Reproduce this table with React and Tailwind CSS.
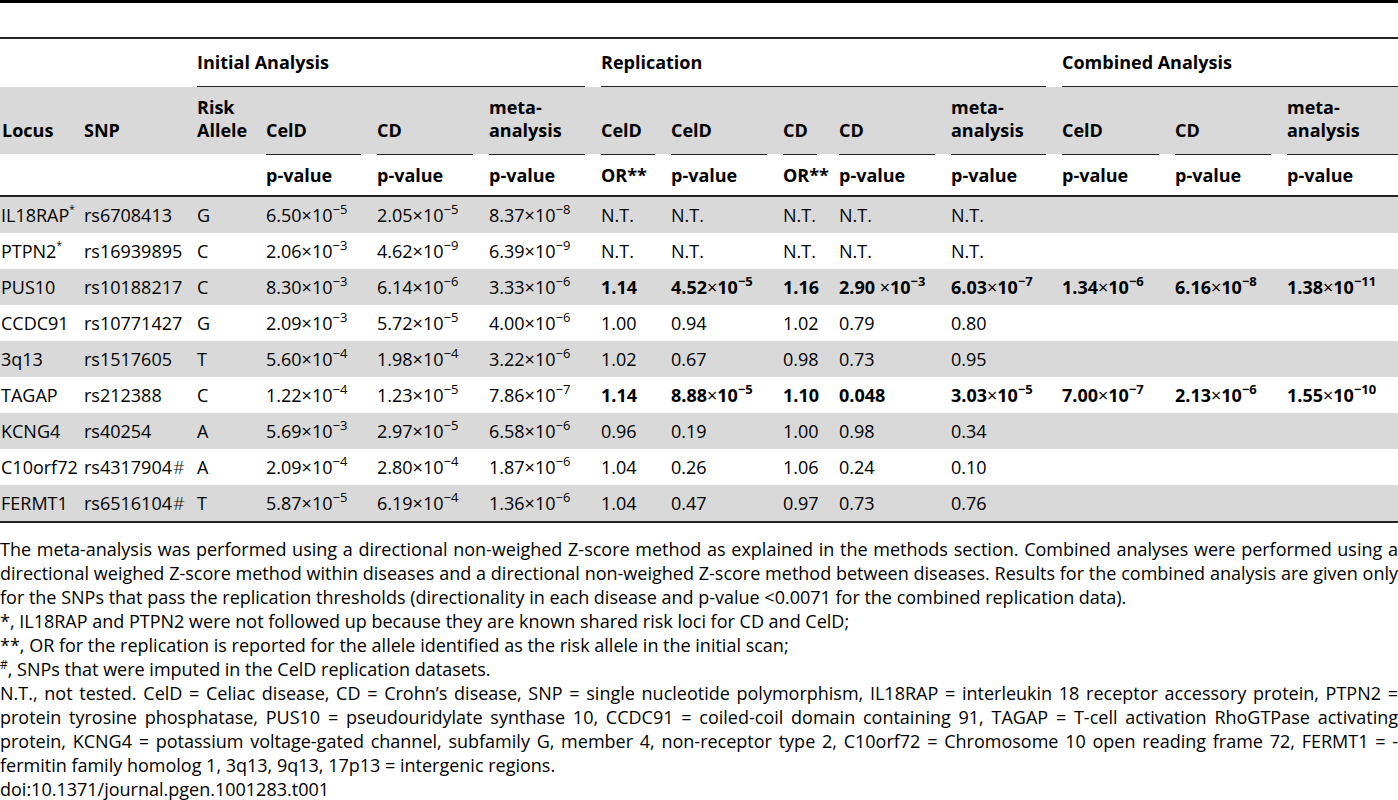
const COLS =
  'grid grid-cols-[84px_113px_69px_111px_112px_112px_70px_112px_56px_112px_111px_113px_112px_111px]'

const sci = (m, x, sp) => ({ m, x, sp })

const rows = [
  ['IL18RAP', true, 'rs6708413', false, 'G', sci('6.50', 5), sci('2.05', 5), sci('8.37', 8), 'N.T.', 'N.T.', 'N.T.', 'N.T.', 'N.T.', '', '', '', false],
  ['PTPN2', true, 'rs16939895', false, 'C', sci('2.06', 3), sci('4.62', 9), sci('6.39', 9), 'N.T.', 'N.T.', 'N.T.', 'N.T.', 'N.T.', '', '', '', false],
  ['PUS10', false, 'rs10188217', false, 'C', sci('8.30', 3), sci('6.14', 6), sci('3.33', 6), '1.14', sci('4.52', 5), '1.16', sci('2.90', 3, true), sci('6.03', 7), sci('1.34', 6), sci('6.16', 8), sci('1.38', 11), true],
  ['CCDC91', false, 'rs10771427', false, 'G', sci('2.09', 3), sci('5.72', 5), sci('4.00', 6), '1.00', '0.94', '1.02', '0.79', '0.80', '', '', '', false],
  ['3q13', false, 'rs1517605', false, 'T', sci('5.60', 4), sci('1.98', 4), sci('3.22', 6), '1.02', '0.67', '0.98', '0.73', '0.95', '', '', '', false],
  ['TAGAP', false, 'rs212388', false, 'C', sci('1.22', 4), sci('1.23', 5), sci('7.86', 7), '1.14', sci('8.88', 5), '1.10', '0.048', sci('3.03', 5), sci('7.00', 7), sci('2.13', 6), sci('1.55', 10), true],
  ['KCNG4', false, 'rs40254', false, 'A', sci('5.69', 3), sci('2.97', 5), sci('6.58', 6), '0.96', '0.19', '1.00', '0.98', '0.34', '', '', '', false],
  ['C10orf72', false, 'rs4317904', true, 'A', sci('2.09', 4), sci('2.80', 4), sci('1.87', 6), '1.04', '0.26', '1.06', '0.24', '0.10', '', '', '', false],
  ['FERMT1', false, 'rs6516104', true, 'T', sci('5.87', 5), sci('6.19', 4), sci('1.36', 6), '1.04', '0.47', '0.97', '0.73', '0.76', '', '', '', false],
]

function Val({ v }) {
  if (typeof v === 'string') return v
  return (
    <>
      {v.m}
      {v.sp ? ' ' : ''}
      <span className="font-normal">×</span>10
      <sup className="text-[13px] -top-[8px]">−{v.x}</sup>
    </>
  )
}

function TwoLine({ a, b }) {
  return (
    <div>
      <div>{a}</div>
      <div>{b}</div>
    </div>
  )
}

function Line({ children, last }) {
  return <div className={last ? 'text-justify' : 'text-justify [text-align-last:justify]'}>{children}</div>
}

export default function App() {
  const sub = ['p-value', 'p-value', 'p-value', 'OR**', 'p-value', 'OR**', 'p-value', 'p-value', 'p-value', 'p-value', 'p-value']

  return (
    <div className="w-[1398px] min-h-[800px] bg-white text-black font-['Open_Sans',sans-serif] text-[18px]">
      <div className="h-[3px] bg-black" />
      <div className="h-[34px]" />
      <div className="border-t-2 border-[#222]" />

      {/* group header */}
      <div className={`${COLS} h-[48px] font-bold`}>
        <div className="col-span-2" />
        <div className="col-span-4 mr-4 border-b border-[#222] flex items-center">Initial Analysis</div>
        <div className="col-span-5 mr-4 border-b border-[#222] flex items-center">Replication</div>
        <div className="col-span-3 border-b border-[#222] flex items-center">Combined Analysis</div>
      </div>

      {/* column header */}
      <div className={`${COLS} h-[67px] bg-[#d9d9d9] font-bold leading-[23px] items-end pb-[12px]`}>
        <div className="pl-[2px]">Locus</div>
        <div>SNP</div>
        <TwoLine a="Risk" b="Allele" />
        <div>CelD</div>
        <div>CD</div>
        <TwoLine a="meta-" b="analysis" />
        <div>CelD</div>
        <div>CelD</div>
        <div>CD</div>
        <div>CD</div>
        <TwoLine a="meta-" b="analysis" />
        <div>CelD</div>
        <div>CD</div>
        <TwoLine a="meta-" b="analysis" />
      </div>

      {/* p-value row */}
      <div className={`${COLS} h-[41px] font-bold`}>
        <div />
        <div />
        <div />
        {sub.map((s, i) => (
          <div
            key={i}
            className={`border-t border-[#222] flex items-center whitespace-nowrap ${i === 10 ? '' : i === 5 ? 'mr-[22px]' : 'mr-4'}`}
          >
            {s}
          </div>
        ))}
      </div>
      <div className="border-t-2 border-[#222]" />

      {/* data */}
      {rows.map((r, ri) => {
        const [locus, star, snp, hash, allele, ...rest] = r
        const bold = rest[11]
        const vals = rest.slice(0, 11)
        return (
          <div key={ri} className={`${COLS} h-9 items-center whitespace-nowrap ${ri % 2 === 0 ? 'bg-[#d9d9d9]' : 'bg-white'}`}>
            <div className="pl-[1px]">
              {locus}
              {star && <sup className="text-[10px] -top-[9px]">*</sup>}
            </div>
            <div>
              {snp}
              {hash && <span className="font-light pl-[1px]">#</span>}
            </div>
            <div>{allele}</div>
            {vals.map((v, i) => (
              <div key={i} className={bold && i >= 3 ? 'font-bold' : ''}>
                <Val v={v} />
              </div>
            ))}
          </div>
        )
      })}
      <div className="border-t-2 border-[#222]" />

      {/* footnotes */}
      <div className="mt-[14px] leading-[24px]">
        <Line>The meta-analysis was performed using a directional non-weighed Z-score method as explained in the methods section. Combined analyses were performed using a</Line>
        <Line>directional weighed Z-score method within diseases and a directional non-weighed Z-score method between diseases. Results for the combined analysis are given only</Line>
        <Line last>for the SNPs that pass the replication thresholds (directionality in each disease and p-value &lt;0.0071 for the combined replication data).</Line>
        <div>*, IL18RAP and PTPN2 were not followed up because they are known shared risk loci for CD and CelD;</div>
        <div>**, OR for the replication is reported for the allele identified as the risk allele in the initial scan;</div>
        <div>
          <sup className="text-[12px] -top-[7px]">#</sup>, SNPs that were imputed in the CelD replication datasets.
        </div>
        <Line>N.T., not tested. CelD = Celiac disease, CD = Crohn’s disease, SNP = single nucleotide polymorphism, IL18RAP = interleukin 18 receptor accessory protein, PTPN2 =</Line>
        <Line>protein tyrosine phosphatase, PUS10 = pseudouridylate synthase 10, CCDC91 = coiled-coil domain containing 91, TAGAP = T-cell activation RhoGTPase activating</Line>
        <Line>protein, KCNG4 = potassium voltage-gated channel, subfamily G, member 4, non-receptor type 2, C10orf72 = Chromosome 10 open reading frame 72, FERMT1 = -</Line>
        <Line last>fermitin family homolog 1, 3q13, 9q13, 17p13 = intergenic regions.</Line>
        <div>doi:10.1371/journal.pgen.1001283.t001</div>
      </div>
    </div>
  )
}
